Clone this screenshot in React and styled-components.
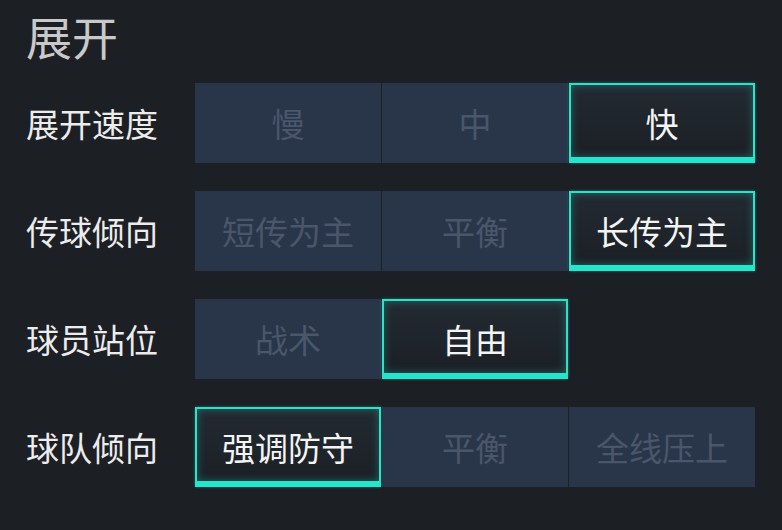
import React from 'react';
import styled, { createGlobalStyle } from 'styled-components';

const Global = createGlobalStyle`
  html, body {
    margin: 0;
    padding: 0;
    background: #1c1f24;
  }
  body {
    font-family: "Noto Sans CJK SC", "Noto Sans", sans-serif;
  }
`;

const Page = styled.div`
  width: 782px;
  height: 530px;
  background: #1c1f24;
  padding: 4px 0 0 26px;
  box-sizing: border-box;
  overflow: hidden;
`;

const Title = styled.h1`
  margin: 0 0 17px 0;
  font-size: 46px;
  font-weight: 400;
  line-height: 62px;
  color: #c9c9c9;
`;

const Rows = styled.div`
  display: flex;
  flex-direction: column;
  gap: 28px;
`;

const Row = styled.div`
  display: flex;
  align-items: center;
`;

const Label = styled.div`
  width: 169px;
  font-size: 33px;
  color: #ececec;
`;

const Group = styled.div`
  display: grid;
  grid-template-columns: repeat(3, 186px);
  column-gap: 1px;
`;

const Option = styled.div`
  height: 80px;
  box-sizing: border-box;
  display: flex;
  align-items: center;
  justify-content: center;
  font-size: 33px;
  background: ${p => (p.$on ? 'linear-gradient(#222a31, #1b2026)' : '#293549')};
  color: ${p => (p.$on ? '#f4f4f4' : '#4a5669')};
  border: ${p => (p.$on ? '2px solid #2ae3cb' : 'none')};
  border-bottom: ${p => (p.$on ? '6px solid #22e6cd' : 'none')};
  box-shadow: ${p => (p.$on ? 'inset 0 0 8px rgba(42, 227, 203, 0.35), 0 0 3px rgba(42, 227, 203, 0.4)' : 'none')};
  padding-top: ${p => (p.$on ? '3px' : '0')};
`;

const rows = [
  { label: '展开速度', options: ['慢', '中', '快'], on: 2 },
  { label: '传球倾向', options: ['短传为主', '平衡', '长传为主'], on: 2 },
  { label: '球员站位', options: ['战术', '自由'], on: 1 },
  { label: '球队倾向', options: ['强调防守', '平衡', '全线压上'], on: 0 },
];

export default function App() {
  return (
    <Page>
      <Global />
      <Title>展开</Title>
      <Rows>
        {rows.map(r => (
          <Row key={r.label}>
            <Label>{r.label}</Label>
            <Group>
              {r.options.map((o, i) => (
                <Option key={o + i} $on={i === r.on}>{o}</Option>
              ))}
            </Group>
          </Row>
        ))}
      </Rows>
    </Page>
  );
}
